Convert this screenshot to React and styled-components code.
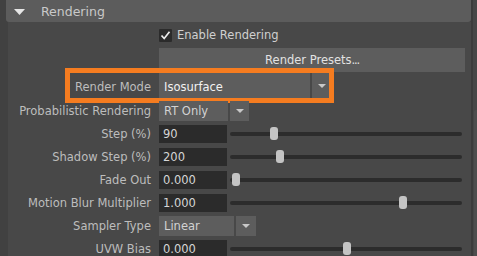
import React from "react";
import styled, { createGlobalStyle } from "styled-components";

const Global = createGlobalStyle`
  html, body { margin: 0; padding: 0; background: #414141; }
  body { font-family: "DejaVu Sans", "Noto Sans", sans-serif; font-size: 11.5px; }
  * { box-sizing: border-box; }
`;

const Frame = styled.div`
  display: flex;
  width: 477px;
  height: 256px;
  overflow: hidden;
  background: #414141;
`;

const Main = styled.div`
  flex: 1;
  display: flex;
  flex-direction: column;
  padding-left: 6px;
`;

const Header = styled.div`
  height: 22px;
  flex: none;
  display: flex;
  align-items: center;
  gap: 16px;
  padding-left: 8px;
  background: #5c5c5c;
  border-radius: 0 0 3px 3px;
  color: #c9c9c9;
  font-size: 12.5px;
  padding-top: 1px;
`;

const Body = styled.div`
  flex: 1;
  margin-left: 2px;
  padding-right: 6px;
  background: #484848;
  display: flex;
  flex-direction: column;
`;

const Row = styled.div`
  position: relative;
  flex: none;
  height: ${(p) => p.$h || 23}px;
  margin-top: ${(p) => p.$mt || 0}px;
  display: grid;
  grid-template-columns: 143px 1fr;
  column-gap: 8px;
  align-items: center;
`;

const Label = styled.div`
  text-align: right;
  color: #bdbdbd;
  white-space: nowrap;
  padding-top: ${(p) => p.$nudge || 0}px;
`;

const Controls = styled.div`
  display: flex;
  align-items: center;
  height: 100%;
`;

const CheckLine = styled.div`
  display: flex;
  align-items: center;
  gap: 5px;
  color: #d0d0d0;
`;

const CheckBox = styled.div`
  width: 13px;
  height: 13px;
  background: #2b2b2b;
  border-radius: 1px;
  display: flex;
  align-items: center;
  justify-content: center;
`;

const Button = styled.div`
  width: 100%;
  height: 24px;
  background: #5d5d5d;
  color: #e2e2e2;
  display: flex;
  align-items: center;
  justify-content: center;
`;

const Dots = styled.span`
  letter-spacing: -1.2px;
`;

const Select = styled.div`
  display: flex;
  gap: 2px;
  height: ${(p) => p.$h || 20}px;
`;

const SelectMain = styled.div`
  width: ${(p) => p.$w}px;
  background: #5d5d5d;
  color: ${(p) => (p.$bright ? "#f2f2f2" : "#d2d2d2")};
  display: flex;
  align-items: center;
  padding-left: 5px;
  padding-top: ${(p) => p.$nudge || 0}px;
`;

const SelectArrow = styled.div`
  width: ${(p) => p.$w || 19}px;
  background: #5d5d5d;
  display: flex;
  align-items: center;
  justify-content: center;
`;

const Input = styled.div`
  width: 68px;
  height: 18px;
  flex: none;
  background: #2b2b2b;
  color: #d6d6d6;
  display: flex;
  align-items: center;
  padding-left: 4px;
`;

const Slider = styled.div`
  position: relative;
  flex: 1;
  height: 14px;
  margin-left: 3px;
  margin-right: 3px;
  display: flex;
  align-items: center;
`;

const Track = styled.div`
  width: 100%;
  height: 4px;
  background: #2c2c2c;
  border-radius: 2px;
`;

const Thumb = styled.div`
  position: absolute;
  top: 0;
  width: 8px;
  height: 13px;
  background: #c4c4c4;
  border-radius: 3px;
`;

const Highlight = styled.div`
  position: absolute;
  left: 57px;
  top: -5px;
  width: 269px;
  height: 35px;
  border: 5px solid #f57c20;
  pointer-events: none;
`;

const Scrollbar = styled.div`
  position: relative;
  width: 6px;
  flex: none;
  border-left: 2px solid #3c3c3c;
  background: #474747;
`;

const ScrollHandle = styled.div`
  position: absolute;
  left: 1px;
  right: 0;
  top: 110px;
  bottom: 0;
  background: #4e4e4e;
  border-radius: 2px 0 0 0;
`;

const Caret = ({ w = 8, h = 4, color = "#c8c8c8" }) => (
  <svg width={w} height={h} viewBox={`0 0 ${w} ${h}`}>
    <polygon points={`0,0 ${w},0 ${w / 2},${h}`} fill={color} />
  </svg>
);

const Dropdown = ({ w, value, arrowW, h, bright, nudge }) => (
  <Select $h={h}>
    <SelectMain $w={w} $bright={bright} $nudge={nudge}>
      {value}
    </SelectMain>
    <SelectArrow $w={arrowW}>
      <Caret />
    </SelectArrow>
  </Select>
);

const SliderField = ({ value, frac }) => (
  <Controls>
    <Input>{value}</Input>
    <Slider>
      <Track />
      <Thumb style={{ left: `${2 + frac * 222}px` }} />
    </Slider>
  </Controls>
);

const sliders1 = [
  { label: "Step (%)", value: "90", frac: 0.171 },
  { label: "Shadow Step (%)", value: "200", frac: 0.198 },
  { label: "Fade Out", value: "0.000", frac: 0 },
  { label: "Motion Blur Multiplier", value: "1.000", frac: 0.752 },
];

export default function App() {
  return (
    <>
      <Global />
      <Frame>
        <Main>
          <Header>
            <Caret w={11} h={6} color="#e6e6e6" />
            <span>Rendering</span>
          </Header>
          <Body>
            <Row $h={26}>
              <span />
              <Controls>
                <CheckLine>
                  <CheckBox>
                    <svg width="11" height="11" viewBox="0 0 11 11">
                      <polyline
                        points="1.5,5.5 4.2,8.5 9.5,1.8"
                        fill="none"
                        stroke="#ececec"
                        strokeWidth="1.7"
                      />
                    </svg>
                  </CheckBox>
                  <span>Enable Rendering</span>
                </CheckLine>
              </Controls>
            </Row>
            <Row $h={24}>
              <span />
              <Button>
                Render Presets<Dots>...</Dots>
              </Button>
            </Row>
            <Row $h={26} $mt={1}>
              <Label $nudge={1}>Render Mode</Label>
              <Controls>
                <Dropdown w={151} arrowW={20} h={26} value="Isosurface" bright nudge={1} />
              </Controls>
              <Highlight />
            </Row>
            <Row>
              <Label>Probabilistic Rendering</Label>
              <Controls>
                <Dropdown w={69} arrowW={19} value="RT Only" />
              </Controls>
            </Row>
            {sliders1.map((s) => (
              <Row key={s.label}>
                <Label>{s.label}</Label>
                <SliderField value={s.value} frac={s.frac} />
              </Row>
            ))}
            <Row>
              <Label>Sampler Type</Label>
              <Controls>
                <Dropdown w={75} arrowW={20} value="Linear" />
              </Controls>
            </Row>
            <Row>
              <Label>UVW Bias</Label>
              <SliderField value="0.000" frac={0.5} />
            </Row>
          </Body>
        </Main>
        <Scrollbar>
          <ScrollHandle />
        </Scrollbar>
      </Frame>
    </>
  );
}
